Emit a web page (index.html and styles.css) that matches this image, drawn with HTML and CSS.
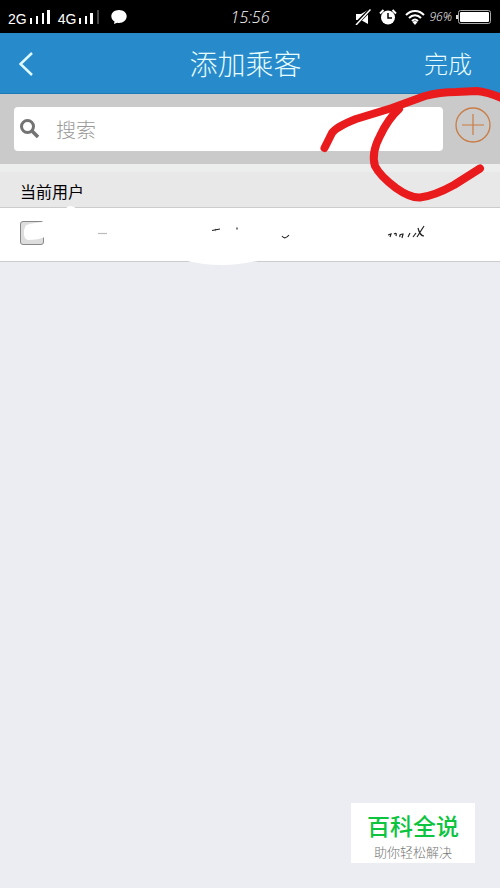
FILE: index.html
```html
<!DOCTYPE html>
<html lang="zh-CN">
<head>
<meta charset="utf-8">
<meta name="viewport" content="width=device-width, initial-scale=1">
<title>添加乘客</title>
<link rel="stylesheet" href="styles.css">
</head>
<body>
<div class="status">
  <div class="status-side">
    <span class="net">2G</span>
    <svg class="bars" width="20" height="16" viewBox="0 0 20 16" fill="#fff"><path d="M0 9h2v6H0zM6 7h2v8H6zM12 4h2v11h-2zM17 1h3v14h-3z"/></svg>
    <span class="net">4G</span>
    <svg class="bars" width="20" height="16" viewBox="0 0 20 16" fill="#fff"><path d="M0 9h2v6H0zM6 7h2v8H6zM11 4h3v11h-3z"/><path fill="#444" d="M18 1h2v14h-2z"/></svg>
    <svg class="bubble" width="16" height="16" viewBox="0 0 16 16" fill="#fff"><path d="M8 1C3.500 1 .3 3.800.3 7.300c0 2.200 1.200 4 3.200 5.100L3 15l3.200-1.200c5.200 1 9.500-2.400 9.500-6.500C15.700 3.800 12.500 1 8 1z"/></svg>
  </div>
  <time class="clock">15:56</time>
  <div class="status-side status-right">
    <svg width="16" height="16" viewBox="0 0 16 16"><path fill="#fff" d="M1 5h5l7-4v14l-7-4H1z"/><path stroke="#000" stroke-width="3.500" d="M0 16 15 1"/><path stroke="#fff" stroke-width="1.500" d="M1 16 15.500.5"/></svg>
    <svg class="alarm" width="18" height="16" viewBox="0 0 18 16"><circle cx="9" cy="8.500" r="7" fill="#fff"/><path d="M9 4v5h4" fill="none" stroke="#000" stroke-width="1.500"/><path d="M1 4.500 4.500 1M17 4.500 13.500 1" stroke="#fff" stroke-width="2"/></svg>
    <svg class="wifi" width="20" height="16" viewBox="0 0 20 16" fill="none" stroke="#fff" stroke-width="2"><path d="M1 6c5-5.500 13-5.500 18 0M4 9c3.500-3.800 8.500-3.800 12 0M7 12c2-2 4-2 6 0"/><path fill="#fff" stroke="none" d="m7.500 13 2.500 3 2.500-3c-1.500-1.500-3.500-1.500-5 0z"/></svg>
    <span class="percent">96%</span>
    <svg width="36" height="16" viewBox="0 0 36 16"><rect x="2.500" y="1.500" width="32" height="13" rx="2" fill="none" stroke="#aaa"/><rect x="4" y="3" width="29" height="10" rx="1" fill="#fff"/><path fill="#ddd" d="M0 6h2v4H0z"/></svg>
  </div>
</div>
<header class="header">
  <button class="back" type="button" aria-label="返回"><svg width="16" height="26" viewBox="0 0 16 26" fill="none" stroke="#dffaff" stroke-width="2.500"><path d="M13 3 1.500 14 13 25"/></svg></button>
  <h1>添加乘客</h1>
  <button class="done" type="button">完成</button>
</header>
<form class="search">
  <label class="field">
    <svg width="20" height="20" viewBox="0 0 20 20" fill="none" stroke="#737373"><circle cx="7.500" cy="7.500" r="6" stroke-width="3"/><path d="m12 12 6 6" stroke-width="3.500"/></svg>
    <input type="search" placeholder="搜索" aria-label="搜索">
  </label>
  <button class="add" type="button" aria-label="添加"><svg width="36" height="36" viewBox="0 0 36 36" fill="none" stroke="#c97c45"><circle cx="18" cy="18" r="17" stroke-width="1.300"/><path d="M18 7v21M7 18h22" stroke-width="1.200"/></svg></button>
  <svg class="scribble" width="180" height="120" viewBox="320 84 180 120" fill="none" stroke="#ea1b1d" stroke-width="8" stroke-linecap="round" stroke-linejoin="round"><path d="M324.500 148 332 133Q336 127 356 119L392 108 425 96Q440 92 456 92L477 91Q488 92 504 99"/><path d="M399 109Q388 119 380 136Q371 153 375 166Q380 176 396 188Q410 198 420 197.500Q434 196 454 185L480 168.500"/></svg>
</form>
<main>
  <h2>当前用户</h2>
  <div class="row">
    <span class="check">
      <input type="checkbox" aria-label="选择乘客">
      <svg class="smear" width="24" height="24" viewBox="0 0 24 24" fill="#fff"><path d="M5 3Q12 1 21 0H24V15Q17 18 7 18 2 17 3 8z"/></svg>
    </span>
    <svg class="marks" width="430" height="62" viewBox="50 205 430 62" fill="none" stroke="#222" stroke-width="1.200">
      <path fill="#fff" stroke="none" d="M65 209q5-6 12 0zM183 260q38 10 79 0z"/>
      <path stroke="#bbb" d="M98 233.500h9"/>
      <path d="M212 230.500l8-1.500M216 229l-1 2M237 227.500v2M282 236q3 4 7-1M388 235l3-1-1 3M394 234q3-2 2 2M400 237q-1-3 3-3l-1 4M408 237l2-4M413 237l3-4M418 228q2 8 6 8M424 226l-7 11"/>
    </svg>
  </div>
</main>
<aside class="badge">
  <strong>百科全说</strong>
  <span>助你轻松解决</span>
</aside>
</body>
</html>
```
FILE: styles.css
```css
* {
  box-sizing: border-box;
}

body {
  margin: 0;
  min-height: 100vh;
  background: #ecedf2;
  font-family: "Noto Sans CJK SC", sans-serif;
  font-weight: 300;
  overflow-x: hidden;
}

svg {
  display: block;
  flex: none;
}

button {
  border: 0;
  padding: 0;
  background: none;
  font: inherit;
  color: inherit;
}

.status {
  display: flex;
  align-items: center;
  height: 33px;
  padding: 0 8px;
  background: #000;
  color: #fff;
}

.status-side {
  display: flex;
  flex: 1;
  align-items: center;
}

.status-right {
  justify-content: flex-end;
  gap: 8px;
}

.net {
  padding-top: 4px;
  font: 14px/16px "Liberation Sans", sans-serif;
}

.bars {
  margin: 0 8px 0 3px;
}

.bubble {
  margin-left: 4px;
}

.clock {
  font: italic 300 16px/20px "Open Sans", sans-serif;
}

.percent {
  margin: 0 -4px;
  font: italic 300 12px/16px "Open Sans", sans-serif;
}

.header {
  display: grid;
  grid-template-columns: 1fr auto 1fr;
  align-items: center;
  height: 61px;
  padding: 0 28px 0 19px;
  background: #278acb;
  border-bottom: 1px solid #1d79b4;
  color: #e6fcff;
}

.header h1 {
  margin: 0;
  font-size: 28px;
  font-weight: 300;
  line-height: 40px;
}

.back {
  justify-self: start;
}

.done {
  justify-self: end;
  font-size: 24px;
  line-height: 40px;
}

.search {
  position: relative;
  display: flex;
  align-items: center;
  gap: 12px;
  height: 70px;
  padding: 0 9px 0 14px;
  background: #cacaca;
}

.field {
  display: flex;
  flex: 1;
  align-items: center;
  gap: 16px;
  height: 44px;
  padding: 0 6px;
  border-radius: 4px;
  background: #fff;
}

.field input {
  flex: 1;
  min-width: 0;
  padding: 0;
  border: 0;
  outline: 0;
  background: none;
  font: inherit;
  font-size: 20px;
}

.field input::placeholder {
  color: #999;
}

.add {
  margin-bottom: 8px;
}

.scribble {
  position: absolute;
  top: -10px;
  right: 0;
  z-index: 1;
  pointer-events: none;
}

h2 {
  margin: 0;
  padding: 4px 20px 0;
  border-top: 8px solid #eceeee;
  background: #e8e8e8;
  font-size: 16px;
  font-weight: 400;
  line-height: 31px;
}

.row {
  position: relative;
  display: flex;
  align-items: center;
  height: 55px;
  padding: 0 20px 4px;
  border-top: 1px solid #ccc;
  border-bottom: 1px solid #ccc;
  background: #fff;
}

.check {
  position: relative;
}

.check input {
  display: block;
  appearance: none;
  width: 24px;
  height: 24px;
  margin: 0;
  border: 1px solid #888;
  border-radius: 3px;
  background: #ddd;
}

.smear {
  position: absolute;
  top: 1px;
  left: 1px;
  pointer-events: none;
}

.marks {
  position: absolute;
  top: -3px;
  left: 50px;
}

.badge {
  position: fixed;
  right: 25px;
  bottom: 25px;
  display: flex;
  flex-direction: column;
  align-items: center;
  padding: 4px 16px 2px;
  background: #fff;
}

.badge strong {
  color: #0cc43d;
  font-size: 23px;
  font-weight: 500;
  line-height: 36px;
}

.badge span {
  color: #777;
  font-size: 13px;
  line-height: 18px;
}
```
